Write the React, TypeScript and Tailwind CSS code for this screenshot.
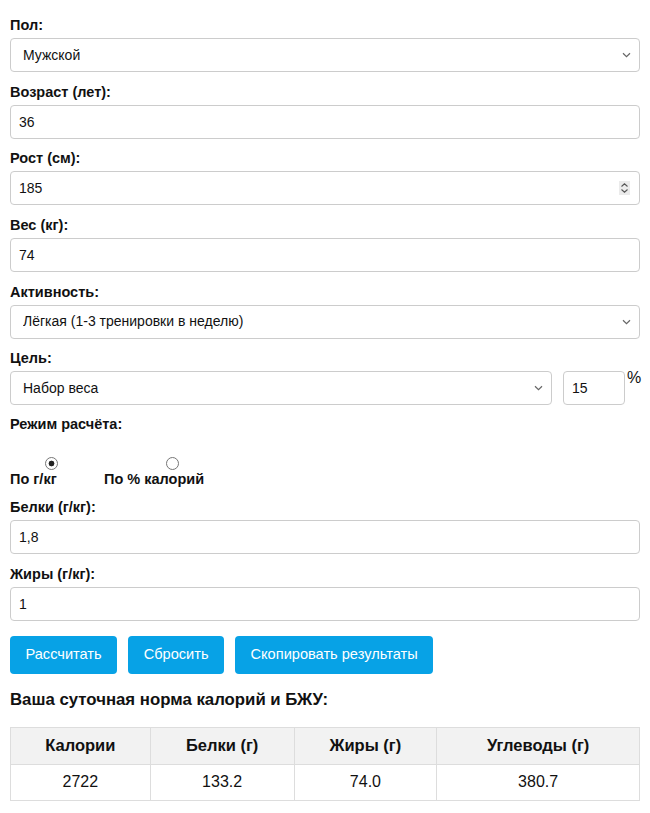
import { useState } from "react";

const boxCls =
  "block h-[34px] px-[8px] border border-[#cccccc] rounded-[4px] bg-white text-[14px] text-[#111] outline-none";
const inputCls = boxCls + " w-full";
const labelCls = "block font-bold text-[14.5px] leading-[16px] mb-[5px] text-[#111]";
const btnCls = "h-[38px] px-[15.5px] rounded-[4px] bg-[#07a2e6] text-white text-[14.6px]";
const radioCls =
  "appearance-none w-[13px] h-[13px] m-0 rounded-full border border-[#767676] bg-white checked:bg-[radial-gradient(circle,#222_0_2.6px,#fff_3.2px)]";

const Chevron = () => (
  <svg
    className="absolute right-[9px] top-[14px] pointer-events-none"
    width="9"
    height="6"
    viewBox="0 0 9 6"
    fill="none"
    stroke="#666"
    strokeWidth="1.2"
  >
    <path d="M1 1.2 L4.5 4.6 L8 1.2" />
  </svg>
);

const Select = ({ options, className }: { options: string[]; className: string }) => {
  return (
    <div className={"relative " + className}>
      <select className={boxCls + " w-full appearance-none pl-[12px]"} defaultValue={options[0]}>
        {options.map((o) => (
          <option key={o}>{o}</option>
        ))}
      </select>
      <Chevron />
    </div>
  );
};

const Field = ({
  label,
  value,
  spinner,
}: {
  label: string;
  value: string;
  spinner?: boolean;
}) => {
  return (
    <div className="mt-[11.67px]">
      <label className={labelCls}>{label}</label>
      <div className="relative">
        <input type="text" defaultValue={value} className={inputCls} />
        {spinner && (
          <div className="absolute right-[10px] top-[10px] w-[11px] h-[14px] bg-[#ebebeb] flex items-center justify-center">
            <svg width="9" height="12" viewBox="0 0 9 12" fill="none" stroke="#555" strokeWidth="1.1">
              <path d="M1.5 4.5 L4.5 1.8 L7.5 4.5" />
              <path d="M1.5 7.5 L4.5 10.2 L7.5 7.5" />
            </svg>
          </div>
        )}
      </div>
    </div>
  );
};

export default function App() {
  const [mode, setMode] = useState("gkg");

  return (
    <div
      className="w-[650px] min-h-[813px] bg-white px-[10px] pt-[17px] pb-[10px] text-[#111]"
      style={{ fontFamily: '"Liberation Sans", Arial, sans-serif' }}
    >
      <div>
        <label className={labelCls}>Пол:</label>
        <Select options={["Мужской", "Женский"]} className="w-full" />
      </div>

      <Field label="Возраст (лет):" value="36" />
      <Field label="Рост (см):" value="185" spinner />
      <Field label="Вес (кг):" value="74" />

      <div className="mt-[11.67px]">
        <label className={labelCls}>Активность:</label>
        <Select
          options={[
            "Лёгкая (1-3 тренировки в неделю)",
            "Сидячий образ жизни",
            "Средняя (3-5 тренировок в неделю)",
          ]}
          className="w-full"
        />
      </div>

      <div className="mt-[11.67px]">
        <label className={labelCls}>Цель:</label>
        <div className="flex items-start">
          <Select
            options={["Набор веса", "Поддержание веса", "Снижение веса"]}
            className="w-[542px] shrink-0"
          />
          <input type="text" defaultValue="15" className={boxCls + " w-[62px] ml-[11px] shrink-0"} />
          <span className="text-[16px] leading-[16px] ml-[2px] -mt-[1px]">%</span>
        </div>
      </div>

      <div className="mt-[11px]">
        <label className={labelCls}>Режим расчёта:</label>
        <div className="flex mt-[25px] font-bold text-[14.5px] leading-[16px]">
          <label className="flex flex-col w-[94px] cursor-pointer">
            <input
              type="radio"
              name="mode"
              checked={mode === "gkg"}
              onChange={() => setMode("gkg")}
              className={radioCls + " ml-[35px]"}
            />
            <span className="mt-[1px]">По г/кг</span>
          </label>
          <label className="flex flex-col cursor-pointer">
            <input
              type="radio"
              name="mode"
              checked={mode === "pct"}
              onChange={() => setMode("pct")}
              className={radioCls + " ml-[62px]"}
            />
            <span className="mt-[1px]">По % калорий</span>
          </label>
        </div>
      </div>

      <Field label="Белки (г/кг):" value="1,8" />
      <Field label="Жиры (г/кг):" value="1" />

      <div className="flex gap-[11px] mt-[15px]">
        <button className={btnCls}>Рассчитать</button>
        <button className={btnCls}>Сбросить</button>
        <button className={btnCls}>Скопировать результаты</button>
      </div>

      <h3 className="font-bold text-[16.8px] leading-[20px] mt-[16px] mb-[17px]">
        Ваша суточная норма калорий и БЖУ:
      </h3>

      <table className="w-full border-collapse text-[16px] text-center">
        <thead>
          <tr className="bg-[#f2f2f2]">
            <th className="border border-[#dddddd] h-[37px] font-bold text-[16.5px]">Калории</th>
            <th className="border border-[#dddddd] h-[37px] font-bold text-[16.5px]">Белки (г)</th>
            <th className="border border-[#dddddd] h-[37px] font-bold text-[16.5px]">Жиры (г)</th>
            <th className="border border-[#dddddd] h-[37px] font-bold text-[16.5px]">Углеводы (г)</th>
          </tr>
        </thead>
        <tbody>
          <tr>
            <td className="border border-[#dddddd] h-[36px]">2722</td>
            <td className="border border-[#dddddd] h-[36px]">133.2</td>
            <td className="border border-[#dddddd] h-[36px]">74.0</td>
            <td className="border border-[#dddddd] h-[36px]">380.7</td>
          </tr>
        </tbody>
      </table>
    </div>
  );
}
